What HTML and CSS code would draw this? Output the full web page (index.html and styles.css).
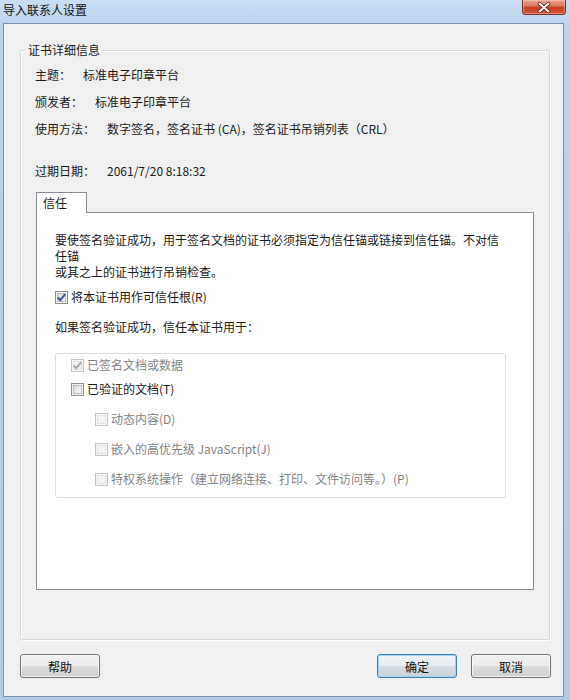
FILE: index.html
```html
<!DOCTYPE html>
<html lang="zh-CN">
<head>
<meta charset="utf-8">
<title>导入联系人设置</title>
<link rel="stylesheet" href="styles.css">
</head>
<body>
<div class="window">
  <div class="titlebar">
    <span class="title">导入联系人设置</span>
    <span class="close">
      <svg width="14" height="11" viewBox="0 0 14 11">
        <path d="M2.5 1.5 L11.5 9.5 M11.5 1.5 L2.5 9.5" stroke="#5a1c12" stroke-width="3.6" stroke-linecap="round"/>
        <path d="M2.5 1.5 L11.5 9.5 M11.5 1.5 L2.5 9.5" stroke="#ffffff" stroke-width="2" stroke-linecap="round"/>
      </svg>
    </span>
  </div>
  <div class="client">
    <fieldset class="group">
      <legend>证书详细信息</legend>
      <div class="info">
        <div class="row"><span class="label">主题：</span><span>标准电子印章平台</span></div>
        <div class="row gap11"><span class="label">颁发者：</span><span>标准电子印章平台</span></div>
        <div class="row gap11"><span class="label">使用方法：</span><span>数字签名，签名证书 (CA)，签名证书吊销列表（CRL）</span></div>
        <div class="row gap26"><span class="label">过期日期：</span><span>2061/7/20 8:18:32</span></div>
      </div>
      <div class="tabs"><div class="tab">信任</div></div>
      <div class="panel">
        <div class="para">
          <div class="pline">要使签名验证成功，用于签名文档的证书必须指定为信任锚或链接到信任锚。不对信</div>
          <div class="pline">任锚</div>
          <div class="pline">或其之上的证书进行吊销检查。</div>
        </div>
        <div class="check c-root">
          <span class="cb"><svg class="tick" width="11" height="11" viewBox="0 0 11 11"><path d="M1.8 5.6 L4.3 8.2 L9.2 2.2" fill="none" stroke="#3d5c9a" stroke-width="2.1"/></svg></span>
          <span>将本证书用作可信任根(R)</span>
        </div>
        <div class="lead">如果签名验证成功，信任本证书用于：</div>
        <div class="optbox">
          <div class="check disabled">
            <span class="cb cb-off"><svg class="tick" width="11" height="11" viewBox="0 0 11 11"><path d="M1.8 5.6 L4.3 8.2 L9.2 2.2" fill="none" stroke="#a9a9a9" stroke-width="2.1"/></svg></span>
            <span>已签名文档或数据</span>
          </div>
          <div class="check gap8">
            <span class="cb"></span>
            <span>已验证的文档(T)</span>
          </div>
          <div class="check disabled sub">
            <span class="cb cb-off"></span>
            <span>动态内容(D)</span>
          </div>
          <div class="check disabled sub">
            <span class="cb cb-off"></span>
            <span>嵌入的高优先级 JavaScript(J)</span>
          </div>
          <div class="check disabled sub">
            <span class="cb cb-off"></span>
            <span>特权系统操作（建立网络连接、打印、文件访问等。）(P)</span>
          </div>
        </div>
      </div>
    </fieldset>
    <div class="buttons">
      <button class="btn btn-help">帮助</button>
      <button class="btn btn-default">确定</button>
      <button class="btn">取消</button>
    </div>
  </div>
</div>
</body>
</html>
```

FILE: styles.css
```css
html, body {
  margin: 0;
  padding: 0;
}

body {
  font-family: "Noto Sans CJK SC", "Microsoft YaHei", sans-serif;
  font-size: 12px;
  color: #1b1b1b;
}

.window {
  width: 570px;
  height: 700px;
  box-sizing: border-box;
  padding: 0 6px 3px 3px;
  display: flex;
  flex-direction: column;
  background: linear-gradient(to bottom, #c9def3 0, #bad2eb 30px, #b1cae6 100%);
}

.titlebar {
  height: 23px;
  flex-shrink: 0;
  display: flex;
  justify-content: space-between;
  align-items: flex-start;
}

.title {
  line-height: 19px;
  color: #111;
}

.close {
  width: 44px;
  height: 15px;
  margin-right: -2px;
  box-sizing: border-box;
  border: 1px solid #7a2f22;
  border-top: none;
  border-radius: 0 0 4px 4px;
  background: linear-gradient(to bottom, #e8a595 0, #dc7a62 40%, #c43e22 55%, #d2583b 100%);
  box-shadow: inset 0 0 0 1px rgba(255, 210, 200, 0.45);
  display: flex;
  align-items: center;
  justify-content: center;
}

.client {
  flex: 1;
  border: 1px solid #7d90a8;
  background: #f0f0f0;
  display: flex;
  flex-direction: column;
}

.group {
  margin: 18px 13px 0 16px;
  padding: 9px 15px 49px 14px;
  border: 1px solid #d5d9dc;
  border-radius: 2px;
  box-shadow: inset 1px 1px 0 #fff, 1px 1px 0 #fff;
  min-width: 0;
}

.group legend {
  padding: 0 2px;
  margin-left: -9px;
  line-height: 16px;
}

.info {
  display: flex;
  flex-direction: column;
}

.row {
  line-height: 16px;
  white-space: nowrap;
}

.label {
  margin-right: 12px;
}

.gap11 { margin-top: 11px; }
.gap26 { margin-top: 26px; }
.gap8 { margin-top: 8px; }

.tabs {
  margin-top: 13px;
  display: flex;
}

.tab {
  position: relative;
  z-index: 1;
  width: 51px;
  height: 21px;
  box-sizing: border-box;
  margin: 0 0 -1px 1px;
  padding-left: 6px;
  border: 1px solid #898c95;
  border-bottom: none;
  background: #fff;
  line-height: 19px;
}

.panel {
  margin-left: 1px;
  height: 378px;
  box-sizing: border-box;
  border: 1px solid #898c95;
  background: #fff;
  padding: 19px 0 0 18px;
}

.para {
  display: flex;
  flex-direction: column;
}

.pline {
  line-height: 16px;
  white-space: nowrap;
}

.check {
  display: flex;
  align-items: center;
  height: 16px;
  line-height: 16px;
  white-space: nowrap;
}

.c-root { margin-top: 9px; }

.lead {
  margin-top: 14px;
  line-height: 16px;
}

.cb {
  width: 13px;
  height: 13px;
  box-sizing: border-box;
  margin-right: 3px;
  flex-shrink: 0;
  border: 1px solid #8e8f8f;
  background: linear-gradient(135deg, #cdd1d6 0, #eef0f2 60%, #f8f8f8 100%);
  box-shadow: inset 0 0 0 1px #f4f4f4, inset 0 0 0 2px #b8bdc3;
  display: flex;
}

.cb-off {
  border-color: #c4c4c4;
  background: #f4f4f4;
  box-shadow: inset 0 0 0 1px #f7f7f7, inset 0 0 0 2px #e2e2e2;
}

.tick {
  display: block;
}

.optbox {
  margin-top: 18px;
  width: 451px;
  box-sizing: border-box;
  border: 1px solid #dcdcdc;
  border-radius: 3px;
  padding: 3px 0 10px 15px;
}

.sub {
  margin-top: 14px;
  padding-left: 24px;
}

.disabled {
  color: #838383;
}

.buttons {
  display: flex;
  gap: 14px;
  margin: 14px 12px 0 16px;
}

.btn {
  width: 80px;
  height: 24px;
  box-sizing: border-box;
  padding: 0;
  font-family: inherit;
  font-size: 12px;
  color: #111;
  border: 1px solid #707070;
  border-radius: 3px;
  background: linear-gradient(to bottom, #f2f2f2 0, #ebebeb 50%, #dddddd 51%, #cfcfcf 100%);
  box-shadow: inset 0 0 0 1px rgba(255, 255, 255, 0.75);
}

.btn-help {
  margin-right: auto;
}

.btn-default {
  border-color: #3c7fb1;
  background: linear-gradient(to bottom, #eef3f7 0, #e6ecf1 50%, #d6dde3 51%, #cad2d8 100%);
  box-shadow: inset 0 0 0 1px #9fd5f3;
}
```
